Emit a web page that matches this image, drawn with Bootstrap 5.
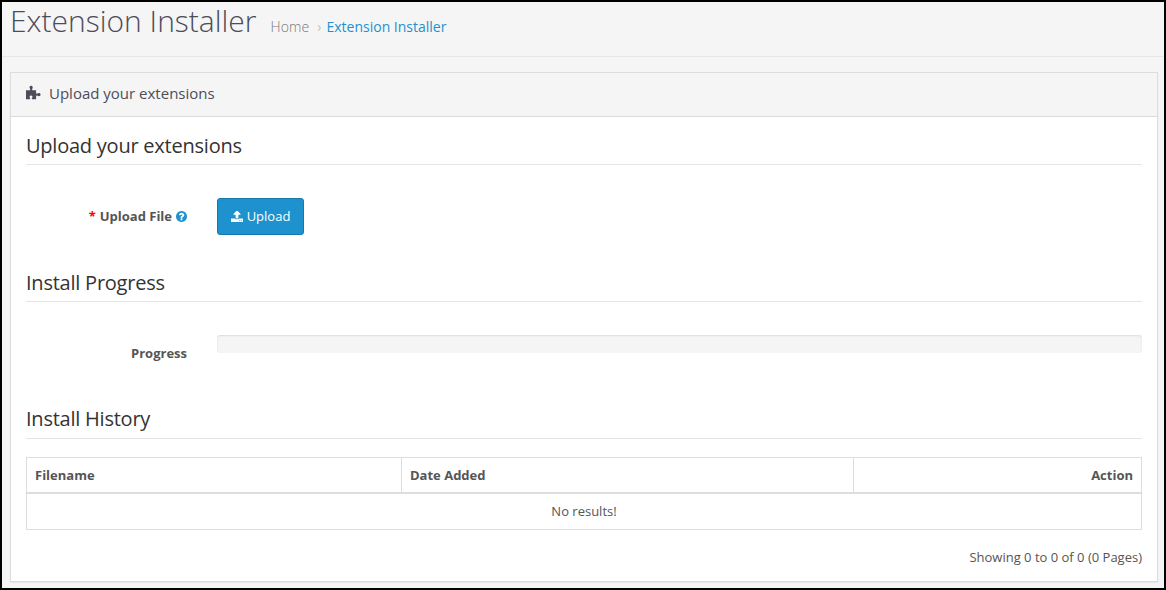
<!DOCTYPE html>
<html lang="en">
<head>
<meta charset="utf-8">
<meta name="viewport" content="width=device-width, initial-scale=1">
<title>Extension Installer</title>
<link href="https://cdn.jsdelivr.net/npm/bootstrap@5.3.0/dist/css/bootstrap.min.css" rel="stylesheet">
<style>
body{font-family:"Open Sans",sans-serif;font-size:13px;line-height:18px;color:#555;background:#f5f5f5}
.frame{height:590px;border:2px solid #000;overflow:hidden}
.page-top{height:55px;border-bottom:1px solid #e8e8e8;padding-left:8px}
.page-top h1{font-size:30px;line-height:33px;font-weight:300;color:#4c4d5a;margin:2px 14px 0 0}
.crumbs{--bs-breadcrumb-divider:"›";--bs-breadcrumb-divider-color:#aaa;font-size:14px;font-weight:300;line-height:20px;margin:15px 0 0}
.crumbs a{color:#777;text-decoration:none;letter-spacing:.15px}
.crumbs .breadcrumb-item+.breadcrumb-item{padding-left:8px}
.crumbs .breadcrumb-item+.breadcrumb-item::before{padding-right:5.500px}
.crumbs .active a{color:#1e91cf;font-weight:400;letter-spacing:0}
.panel-box{margin:15px 6px 0 8px;height:510px;border:1px solid #dcdcdc;border-radius:0;box-shadow:0 1px 1px rgba(0,0,0,.05)}
.panel-box>.card-header{height:45px;background:#f5f5f5;border-color:#dcdcdc;border-radius:0;padding:10px 15px;font-size:15px;line-height:20px;color:#4c4d5a}
.panel-box>.card-body{padding:15px}
.puzzle{margin-top:2px}
.section-title{font-size:20px;line-height:28px;letter-spacing:-.23px;height:33px;color:#333;border-bottom:1px solid #e5e5e5;margin:0}
.history-title{height:34px}
.field-label{width:161px;margin-right:30px;text-align:right;font-weight:700}
.file-label{padding-top:9px}
.meter-label{padding-top:9px}
.help-mark{color:#1e91cf}
.btn-upload{--bs-btn-bg:#1e91cf;--bs-btn-color:#fff;--bs-btn-border-color:#1978ab;--bs-btn-hover-bg:#197bb0;--bs-btn-hover-color:#fff;width:87px;height:37px;padding:0 0 2px;font-size:13px;line-height:18px;border-radius:3px}
.btn-upload svg{margin:2px 4px 0 0}
.star{color:#f00}
.upload-row{height:104px;padding-top:33px}
.progress-row{height:103px;padding-top:33px}
.meter{height:18px;border-radius:3px;background:#f5f5f5;box-shadow:inset 0 1px 2px rgba(0,0,0,.1)}
.history{margin:18px 0;border-color:#ddd;color:#555;table-layout:fixed;font-size:13px}
.history>:not(caption)>*>*{padding:8px;line-height:19px;height:36px}
.history>thead>tr>th{border-bottom:2px solid #ddd;padding-bottom:7px;height:35px}
svg{display:block;fill:currentColor;flex:none}
</style>
</head>
<body>
<div class="frame">
  <header class="page-top d-flex align-items-start">
    <h1>Extension Installer</h1>
    <nav aria-label="breadcrumb"><ol class="breadcrumb crumbs">
      <li class="breadcrumb-item"><a href="#">Home</a></li>
      <li class="breadcrumb-item active"><a href="#">Extension Installer</a></li>
    </ol></nav>
  </header>
  <main class="card panel-box">
    <div class="card-header d-flex align-items-start">
      <svg class="puzzle" width="15" height="15" viewBox="0 0 15 15"><path d="M0 5.300h3.400c.9 0 1.100-.7.7-1.300C3 2.300 3.600 .8 5.100 .8S7.200 2.300 6.300 3.900c-.4.7-.1 1.400.8 1.400h3v2.500c0 1 .7 1.200 1.300.7 1.500-1.100 3.200-.4 3.200 1.100s-1.700 2.200-3.100 1.200c-.7-.5-1.400-.2-1.400.6v2.900H6.500c-.8 0-.9-.6-.5-1.200 1-1.500.4-2.700-.9-2.700s-2 1.200-1.100 2.600c.5.700.2 1.300-.6 1.300H0z"/></svg>
      <span class="ms-2">Upload your extensions</span>
    </div>
    <div class="card-body">
      <h2 class="section-title fw-normal">Upload your extensions</h2>
      <div class="upload-row d-flex align-items-start">
        <label class="field-label file-label d-flex justify-content-end align-items-center"><span class="star me-1">*</span>Upload File
          <svg class="ms-1 help-mark" width="11" height="11" viewBox="128 128 1536 1536"><path d="M1024 1376v-192q0-14-9-23t-23-9h-192q-14 0-23 9t-9 23v192q0 14 9 23t23 9h192q14 0 23-9t9-23zm256-672q0-88-55.500-163t-138.500-116-170-41q-243 0-371 213-15 24 8 42l132 100q7 6 19 6 16 0 25-12 53-68 86-92 34-24 86-24 48 0 85.500 26t37.500 59q0 38-20 61t-68 45q-63 28-115.500 86.500t-52.500 125.500v36q0 14 9 23t23 9h192q14 0 23-9t9-23q0-19 21.500-49.500t54.500-49.500q32-18 49-28.500t46-35 44.500-48 28-60.500 12.500-81zm384 192q0 209-103 385.500t-279.500 279.500-385.500 103-385.500-103-279.500-279.500-103-385.500 103-385.500 279.500-279.500 385.500-103 385.500 103 279.500 279.500 103 385.500z"/></svg>
        </label>
        <button type="button" class="btn btn-upload d-flex align-items-center justify-content-center"><svg width="12" height="12" viewBox="64 0 1664 1664"><path d="M1344 1344q0-26-19-45t-45-19-45 19-19 45 19 45 45 19 45-19 19-45zm256 0q0-26-19-45t-45-19-45 19-19 45 19 45 45 19 45-19 19-45zm128-224v320q0 40-28 68t-68 28h-1472q-40 0-68-28t-28-68v-320q0-40 28-68t68-28h427q21 56 70.500 92t110.500 36h256q61 0 110.500-36t70.500-92h427q40 0 68 28t28 68zm-325-648q-17 40-59 40h-256v448q0 26-19 45t-45 19h-256q-26 0-45-19t-19-45v-448h-256q-42 0-59-40-17-39 14-69l448-448q18-19 45-19t45 19l448 448q31 30 14 69z"/></svg>Upload</button>
      </div>
      <h2 class="section-title fw-normal">Install Progress</h2>
      <div class="progress-row d-flex align-items-start">
        <label class="field-label meter-label">Progress</label>
        <div class="meter flex-grow-1" role="progressbar" aria-label="Progress"></div>
      </div>
      <h2 class="section-title history-title fw-normal">Install History</h2>
      <table class="table table-bordered history">
        <colgroup><col style="width:375px"><col style="width:452px"><col></colgroup>
        <thead><tr><th>Filename</th><th>Date Added</th><th class="text-end">Action</th></tr></thead>
        <tbody><tr><td colspan="3" class="text-center">No results!</td></tr></tbody>
      </table>
      <div class="text-end">Showing 0 to 0 of 0 (0 Pages)</div>
    </div>
  </main>
</div>
<script src="https://cdn.jsdelivr.net/npm/bootstrap@5.3.0/dist/js/bootstrap.bundle.min.js"></script>
</body>
</html>
